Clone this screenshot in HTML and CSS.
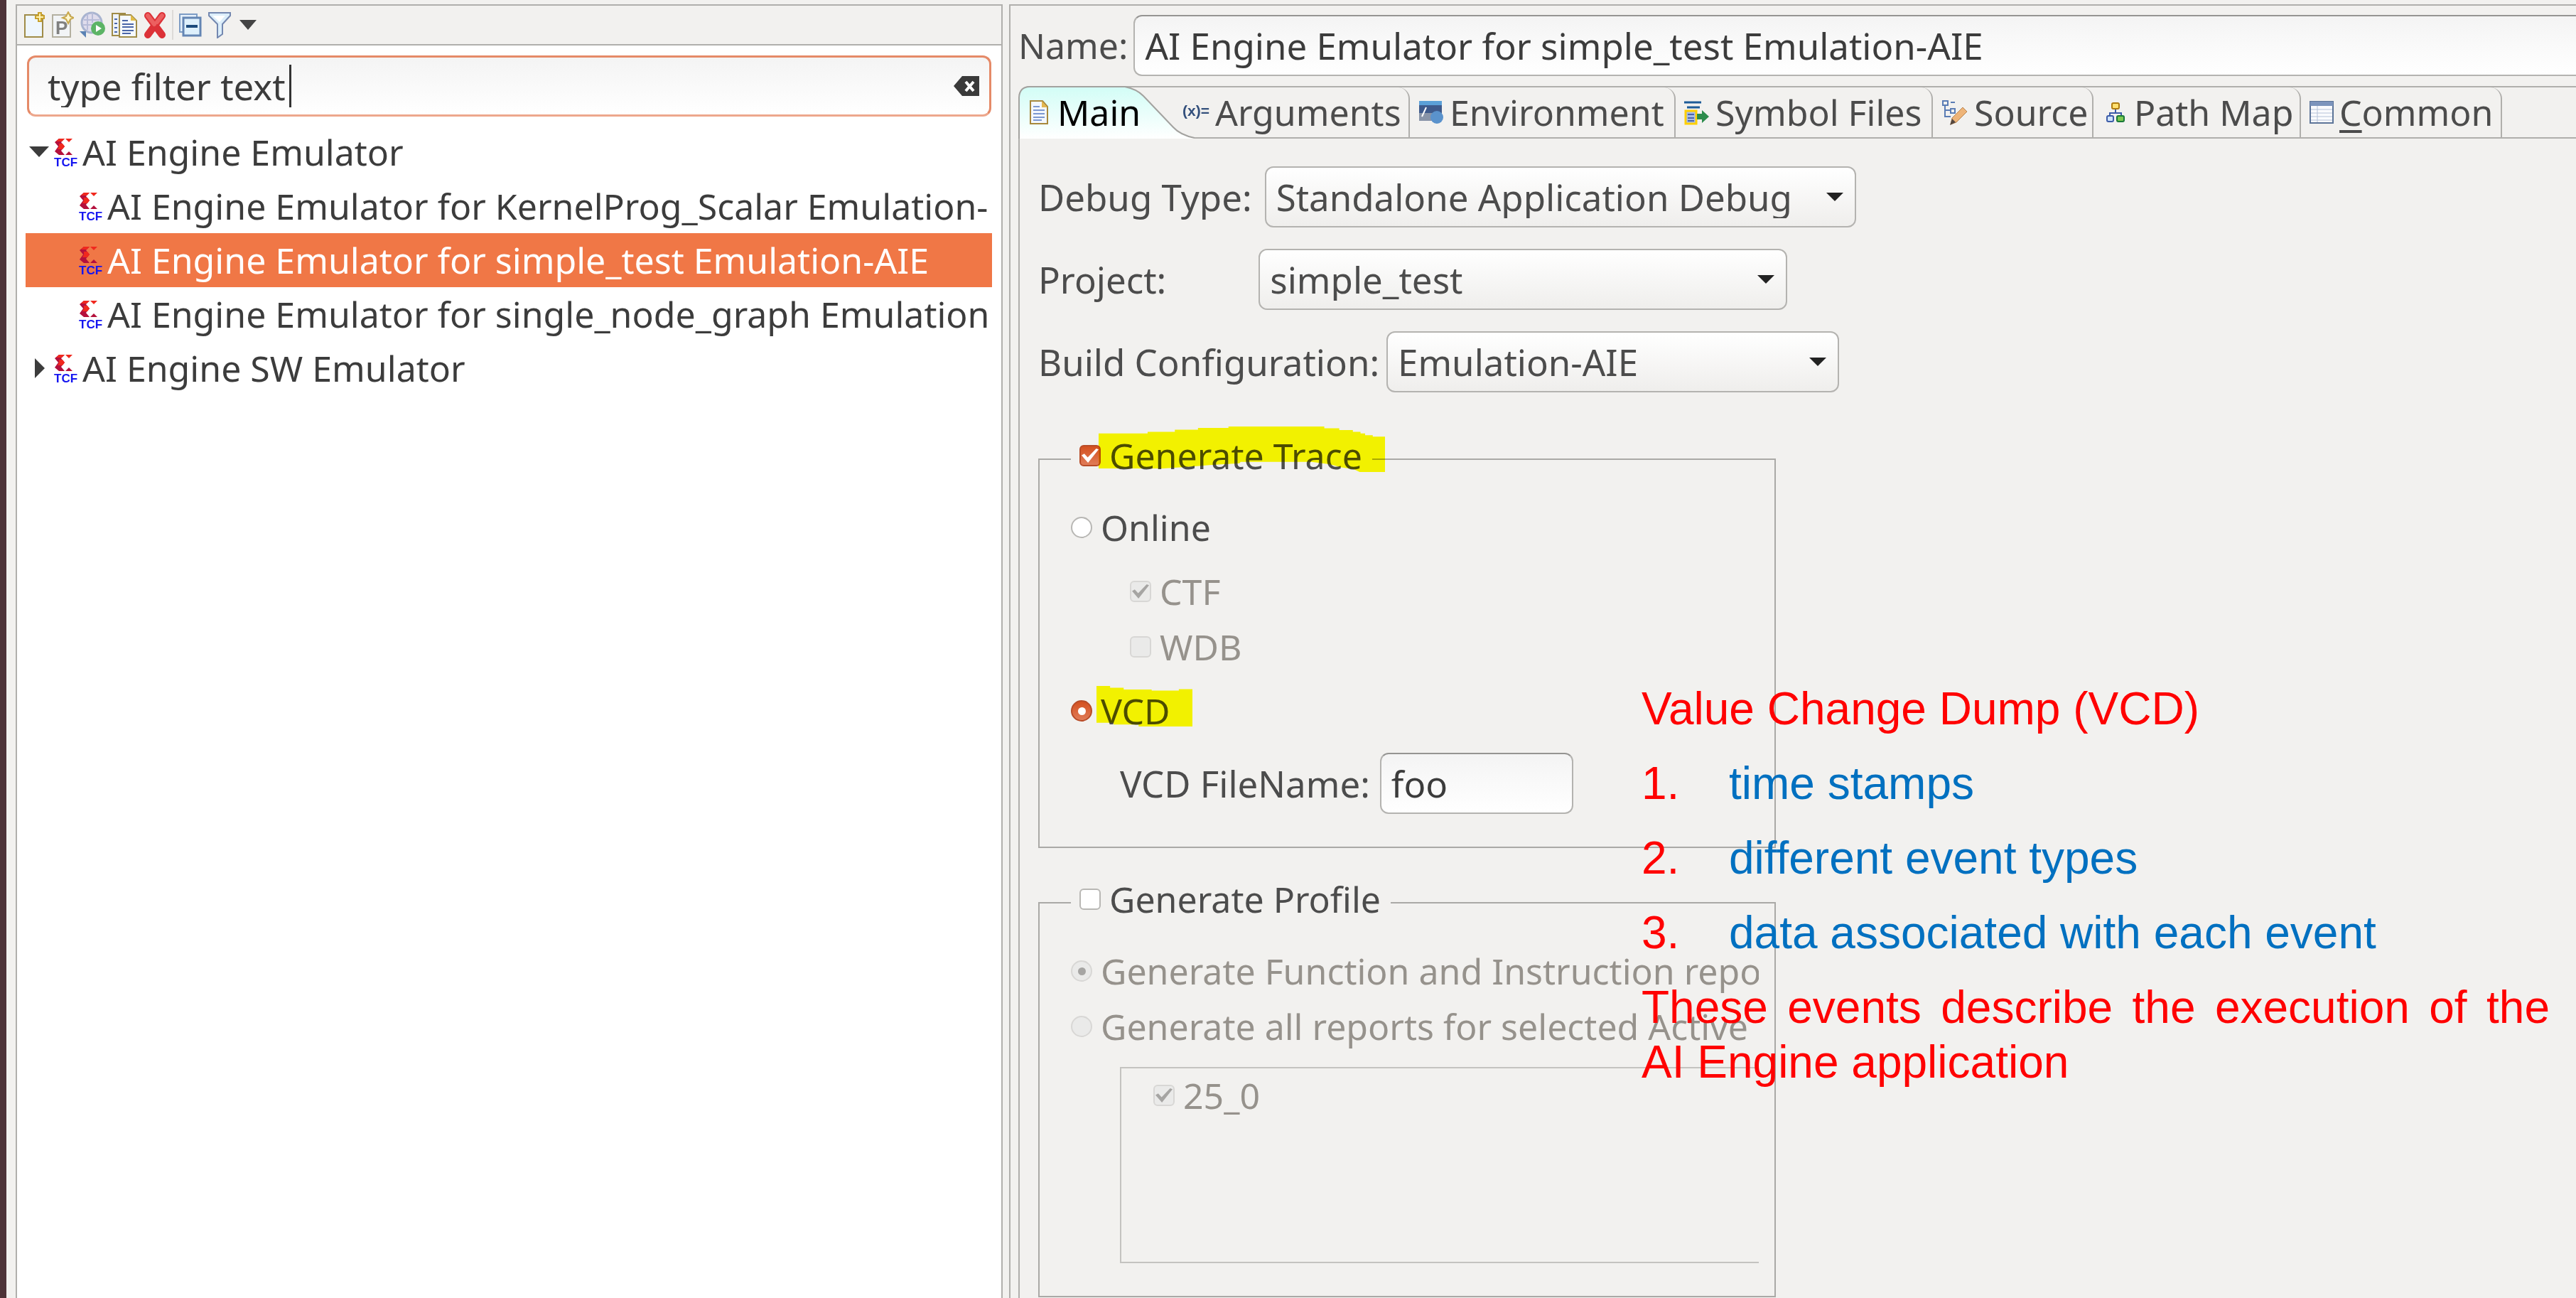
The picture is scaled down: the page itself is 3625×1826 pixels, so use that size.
FILE: index.html
```html
<!DOCTYPE html>
<html lang="en">
<head>
<meta charset="utf-8">
<title>Debug Configurations</title>
<link rel="stylesheet" href="styles.css">
</head>
<body>
<svg class="sprite" aria-hidden="true">
  <symbol id="tcf" viewBox="0 0 34 40">
    <path d="M7 1H15L10 6 15 12 10 18 15 24H7L1 19 6 12 1 6z" fill="#b4103c"/>
    <path d="M7 1h8l-4 4H3zM7 8l5 0 3 4-3 4H5l2-4z" fill="#f0281e"/>
    <path d="M16 24h10l-5-5z" fill="#b4103c"/>
    <path d="M16 1h10l-5 5z" fill="#f0281e"/>
    <text x="0" y="40" class="tcf-text">TCF</text>
  </symbol>
</svg>
<main class="window">
  <section class="pane configs">
    <div class="toolbar" role="toolbar" aria-label="Configurations">
      <button class="tool" aria-label="New configuration"><svg width="32" height="38" viewBox="0 0 32 38"><path d="M2 5h25v31H2z" fill="#eef6fd" stroke="#a08c48" stroke-width="2"/><path d="M23 1v14M16 8h14" stroke="#c8a02c" stroke-width="6"/><path d="M23 3v10M18 8h10" stroke="#fff3b0" stroke-width="2"/></svg></button>
      <button class="tool" aria-label="New prototype"><svg width="32" height="38" viewBox="0 0 32 38"><path d="M2 5h25v31H2z" fill="#f2f4f6" stroke="#b4b0a0" stroke-width="2"/><text x="6" y="32" class="proto-text">P</text><path d="M24 1l3 6 5 2-5 2-3 6-3-6-5-2 5-2z" fill="#fff8d0" stroke="#c8a84c" stroke-width="2"/></svg></button>
      <button class="tool" aria-label="Export"><svg width="38" height="38" viewBox="0 0 38 38"><circle cx="18" cy="16" r="14" fill="#dfdcec" stroke="#a9b4d0" stroke-width="3"/><path d="M7 12h22M5 19h14M12 4v22M19 2v14" stroke="#b8bcd8" stroke-width="2"/><path d="M1 28h9v9z" fill="#5a82b4"/><circle cx="27" cy="24" r="10" fill="#5cb465"/><path d="M24 19l8 5-8 5z" fill="#fff"/></svg></button>
      <button class="tool" aria-label="Duplicate"><svg width="38" height="38" viewBox="0 0 38 38"><path d="M2 3h18v31H2z" fill="#eef3fb" stroke="#a08c48" stroke-width="2"/><path d="M12 5h16l8 8v23H12z" fill="#f5f9fe" stroke="#a08c48" stroke-width="2"/><path d="M28 5v8h8z" fill="#e0bb48"/><path d="M5 11h4M5 17h4M5 23h4M5 29h4M16 13h8M16 18h16M16 22h16M16 27h16M16 31h12" stroke="#4a66a8" stroke-width="2"/></svg></button>
      <button class="tool" aria-label="Delete"><svg width="34" height="38" viewBox="0 0 34 38"><path d="M7 6l20 27M27 6L7 33" stroke="#dc3238" stroke-width="10" stroke-linecap="round"/><path d="M7 6l9 12M27 6l-7 9" stroke="#ec6060" stroke-width="6" stroke-linecap="round"/></svg></button>
      <span class="tool-rule"></span>
      <button class="tool" aria-label="Collapse all"><svg width="34" height="38" viewBox="0 0 34 38"><path d="M2 4h24v25H2z" fill="#e6f1fb" stroke="#7d9cc4" stroke-width="2"/><path d="M7 9h24v25H7z" fill="#def0fc" stroke="#6486b4" stroke-width="3"/><path d="M11 21h16" stroke="#1c4a7c" stroke-width="4"/></svg></button>
      <button class="tool" aria-label="Filter"><svg width="34" height="38" viewBox="0 0 34 38"><path d="M2 2h30v4L21 18v14l-7 5V18L2 6z" fill="#dceefa" stroke="#7488b0" stroke-width="2"/><path d="M7 6h18l-8 9z" fill="#fff"/></svg></button>
      <button class="tool menu-tool" aria-label="Filter menu"><svg width="24" height="14" viewBox="0 0 24 14"><path d="M0 0h24L12 14z" fill="#444"/></svg></button>
    </div>
    <div class="filter">
      <input class="filter-text" type="text" aria-label="Filter" value="type filter text">
      <span class="caret"></span>
      <button class="clear" aria-label="Clear"><svg width="36" height="30" viewBox="0 0 36 30"><path d="M12 1h24v28H12L0 15z" fill="#3a3a3a"/><path d="M17 9l11 13M28 9L17 22" stroke="#fff" stroke-width="4"/></svg></button>
    </div>
    <ul class="tree" role="tree">
      <li class="node" role="treeitem" aria-expanded="true"><svg class="twisty" width="28" height="28" viewBox="0 0 28 28"><path d="M0 6h28L14 21z" fill="#3c3c3c"/></svg><svg class="tcf"><use href="#tcf"/></svg><span>AI Engine Emulator</span></li>
      <li class="node child" role="treeitem"><svg class="tcf"><use href="#tcf"/></svg><span>AI Engine Emulator for KernelProg_Scalar Emulation-</span></li>
      <li class="node child selected" role="treeitem" aria-selected="true"><svg class="tcf"><use href="#tcf"/></svg><span>AI Engine Emulator for simple_test Emulation-AIE</span></li>
      <li class="node child" role="treeitem"><svg class="tcf"><use href="#tcf"/></svg><span>AI Engine Emulator for single_node_graph Emulation</span></li>
      <li class="node" role="treeitem" aria-expanded="false"><svg class="twisty" width="28" height="28" viewBox="0 0 28 28"><path d="M8 0l14 14L8 28z" fill="#3c3c3c"/></svg><svg class="tcf"><use href="#tcf"/></svg><span>AI Engine SW Emulator</span></li>
    </ul>
  </section>
  <section class="pane details">
    <div class="name-row">
      <label for="name">Name:</label>
      <input id="name" class="field name-field" type="text" value="AI Engine Emulator for simple_test Emulation-AIE">
    </div>
    <div class="tabs" role="tablist">
      <button class="tab main" role="tab" aria-selected="true">
        <svg class="tab-shape" viewBox="0 0 248 74" width="248" height="74"><defs><linearGradient id="glow" x1="0" y1="0" x2="0" y2="1"><stop offset="0" stop-color="#d2fdf6"/><stop offset="1" stop-color="#fff"/></linearGradient></defs><path d="M1 74V16Q2 1 16 1H150Q166 4 176 14L218 58Q228 69 248 73V74z" fill="url(#glow)"/><path d="M1 74V16Q2 1 16 1H150Q166 4 176 14L218 58Q228 69 248 73" fill="none" stroke="#a3a29f" stroke-width="2"/></svg>
        <svg class="tab-icon" width="28" height="34" viewBox="0 0 28 34"><path d="M2 1h17l7 8v24H2z" fill="#f3f7fd" stroke="#a8883c" stroke-width="2"/><path d="M18 1v9h8z" fill="#e4b850"/><path d="M6 9h9M6 14h16M6 19h16M6 24h16M6 28h12" stroke="#7c98d0" stroke-width="2"/></svg>
        <span>Main</span></button>
      <button class="tab arguments" role="tab"><svg class="tab-icon" width="38" height="34" viewBox="0 0 38 34"><text x="0" y="22" class="args-text">(x)=</text></svg><span>Arguments</span></button>
      <button class="tab environment" role="tab"><svg class="tab-icon" width="36" height="34" viewBox="0 0 36 34"><path d="M1 1h32v28H1z" fill="#3e5a8c"/><path d="M1 1h32v6H1z" fill="#5ba0d8"/><path d="M1 18h20v11H1z" fill="#8894a8"/><path d="M5 23l6-13" stroke="#fff" stroke-width="2"/><circle cx="26" cy="24" r="9" fill="#5a92cc"/></svg><span>Environment</span></button>
      <button class="tab symbols" role="tab"><svg class="tab-icon" width="36" height="36" viewBox="0 0 36 36"><path d="M0 4h24M4 11h18" stroke="#1c5c98" stroke-width="3"/><path d="M2 16h15v18H2z" fill="#a8bce8" stroke="#ffd000" stroke-width="3"/><path d="M5 21h9M5 26h9M5 30h9" stroke="#4a66a8" stroke-width="2"/><path d="M18 20h7v-5l10 9-10 9v-5h-7z" fill="#2c8c4c"/></svg><span>Symbol Files</span></button>
      <button class="tab source" role="tab"><svg class="tab-icon" width="38" height="36" viewBox="0 0 38 36"><path d="M2 2h7v6H2zM13 13h6v6h-6zM13 4h6M5 8v16h8M5 15h8" fill="none" stroke="#5a7cb4" stroke-width="2"/><path d="M15 26L30 11l6 6-15 15-8 3z" fill="#eeb478" stroke="#b88450" stroke-width="1"/><path d="M15 27l5 5-8 4z" fill="#554840"/></svg><span>Source</span></button>
      <button class="tab pathmap" role="tab"><svg class="tab-icon" width="28" height="28" viewBox="0 0 28 28"><path d="M14 9v6M6 19v-4h16v4" fill="none" stroke="#3c5ca8" stroke-width="2"/><rect x="9" y="1" width="10" height="8" rx="2" fill="#ffe070" stroke="#b07c10" stroke-width="2"/><rect x="2" y="19" width="9" height="8" rx="2" fill="#cfe4fa" stroke="#3c5ca8" stroke-width="2"/><rect x="16" y="19" width="10" height="8" rx="2" fill="#7cc850" stroke="#187838" stroke-width="2"/></svg><span>Path Map</span></button>
      <button class="tab common" role="tab"><svg class="tab-icon" width="34" height="32" viewBox="0 0 34 32"><path d="M1 1h32v30H1z" fill="#fafbfd" stroke="#5c7498" stroke-width="2"/><path d="M1 1h32v6H1z" fill="#7c94bc"/><path d="M2 12h30M2 17h30M2 22h30M2 27h30M11 7v23" stroke="#b4c2d8" stroke-width="1"/></svg><span><span class="mnemonic">C</span>ommon</span></button>
    </div>
    <div class="sheet">
      <div class="row"><label for="debug-type">Debug Type:</label>
        <div class="picker debug-type"><select id="debug-type"><option>Standalone Application Debug</option></select></div></div>
      <div class="row"><label for="project">Project:</label>
        <div class="picker project"><select id="project"><option>simple_test</option></select></div></div>
      <div class="row"><label for="build">Build Configuration:</label>
        <div class="picker build"><select id="build"><option>Emulation-AIE</option></select></div></div>

      <fieldset class="group trace">
        <legend><label class="choice"><input type="checkbox" checked><span>Generate Trace</span></label>
          <svg class="marker trace-marker" viewBox="303 96 1052 156" preserveAspectRatio="none"><path d="M303 120H483V114H583V107H668V101H780V96H1132V102H1187V108H1237V114H1265V120H1282V126H1310V131H1355V252H1262L1240 242 1195 236 1150 225 1085 217H825L820 222 710 228 640 234 540 240H303z" fill="#ff0"/></svg>
        </legend>
        <label class="choice"><input type="radio" name="trace"><span>Online</span></label>
        <div class="nested">
          <label class="choice"><input type="checkbox" checked disabled><span>CTF</span></label>
          <label class="choice"><input type="checkbox" disabled><span>WDB</span></label>
        </div>
        <div class="vcd"><label class="choice"><input type="radio" name="trace" checked><span>VCD</span></label>
          <svg class="marker vcd-marker" viewBox="297 990 353 139" preserveAspectRatio="none"><path d="M297 990H347V996H397V1002H500V1006H600V1001H650V1129H452V1122H360V1116H297z" fill="#ff0"/></svg>
        </div>
        <div class="file-row"><label for="vcd-file">VCD FileName:</label><input id="vcd-file" class="field file-field" type="text" value="foo"></div>
      </fieldset>

      <fieldset class="group">
        <legend><label class="choice"><input type="checkbox"><span>Generate Profile</span></label></legend>
        <label class="choice"><input type="radio" name="profile" checked disabled><span>Generate Function and Instruction repo</span></label>
        <label class="choice"><input type="radio" name="profile" disabled><span>Generate all reports for selected Active</span></label>
        <div class="list"><label class="choice"><input type="checkbox" checked disabled><span>25_0</span></label></div>
      </fieldset>
    </div>
    <aside class="note">
      <p>Value Change Dump (VCD)</p>
      <ol>
        <li><span>time stamps</span></li>
        <li><span>different event types</span></li>
        <li><span>data associated with each event</span></li>
      </ol>
      <p>These events describe the execution of the AI Engine application</p>
    </aside>
  </section>
</main>
</body>
</html>
```
FILE: styles.css
```css
* { box-sizing: border-box; }
body {
  margin: 0;
  background: #f2f1ef;
  color: #4c4c4c;
  font: 51px/60px "Noto Sans", "Open Sans", sans-serif;
}
button, input, select { font: inherit; color: inherit; }
button { border: 0; padding: 0; background: none; }
.sprite { position: absolute; width: 0; height: 0; }

.window {
  display: grid;
  grid-template-columns: 1389fr 2205fr;
  gap: 9px;
  min-height: 100vh;
  padding: 6px 0 0 13px;
  border-left: 9px solid #4d3338;
}
.pane { border: 2px solid #b0afac; border-bottom: 0; min-width: 0; }

/* configuration list */
.configs { background: #fff; color: #3c3c3c; }
.toolbar {
  display: flex;
  align-items: center;
  gap: 7px;
  height: 56px;
  padding-left: 9px;
  background: #f2f1ef;
  border-bottom: 2px solid #b0afac;
}
.tool { display: flex; }
.tool-rule { width: 2px; height: 42px; background: #dddbd8; }
.menu-tool { margin-left: 4px; }
.proto-text { font: bold 26px "Liberation Sans", sans-serif; fill: #808080; }
.filter {
  display: flex;
  align-items: center;
  height: 86px;
  margin: 14px 14px 0 14px;
  padding: 0 14px 0 26px;
  border: 3px solid #e58a68;
  border-bottom-color: #eda78c;
  border-radius: 12px;
  background: linear-gradient(#f4f4f4, #fff);
}
.filter-text { border: 0; padding: 0; width: 340px; background: none; outline: 0; }
.caret { width: 3px; height: 60px; background: #333; }
.clear { display: flex; margin-left: auto; }
.tree { list-style: none; margin: 12px 13px 0 12px; padding: 0; font-size: 50px; }
.node {
  display: flex;
  align-items: center;
  height: 76px;
  padding-left: 5px;
  overflow: hidden;
  white-space: nowrap;
}
.child { padding-left: 75px; }
.selected { background: #f07746; color: #fff; }
.twisty { flex: none; margin-right: 7px; }
.tcf { flex: none; width: 34px; height: 40px; margin-right: 6px; }
.tcf-text { font: bold 17px "Liberation Sans", sans-serif; fill: #1414f0; }

/* configuration details */
.details { display: flex; flex-direction: column; position: relative; border-right: 0; }
.name-row { display: flex; align-items: center; padding: 13px 0 0 11px; gap: 8px; }
.name-row label { font-size: 50px; }
.field {
  height: 86px;
  padding: 0 14px;
  border: 2px solid #b4b3b0;
  border-top-color: #959492;
  border-radius: 12px;
  background: linear-gradient(#f4f4f4, #fff);
  color: #3c3c3c;
}
.name-field { flex: 1; min-width: 0; border-right: 0; border-radius: 12px 0 0 12px; }
.tabs {
  display: flex;
  height: 74px;
  margin: 14px 0 0 11px;
  border: 2px solid #b0afac;
  border-width: 2px 0;
  border-top-left-radius: 16px;
  font-size: 50px;
}
.tab {
  position: relative;
  display: flex;
  align-items: center;
  gap: 8px;
  padding-left: 12px;
  border-right: 2px solid #b0afac;
  border-top-right-radius: 16px;
  white-space: nowrap;
}
.tab-icon { flex: none; position: relative; }
.tab > span { position: relative; }
.main { width: 230px; gap: 12px; padding-left: 15px; border-right: 0; color: #000; }
.tab-shape { position: absolute; left: 0; top: -2px; }
.arguments { width: 321px; padding-left: 1px; }
.environment { width: 374px; }
.symbols { width: 362px; }
.source { width: 226px; }
.pathmap { width: 292px; padding-left: 17px; gap: 12px; }
.common { width: 283px; }
.args-text { font: bold 21px "Liberation Sans", sans-serif; fill: #34507c; }
.mnemonic { text-decoration: underline 4px; text-underline-offset: 6px; }
.sheet { flex: 1; margin-left: 11px; padding: 39px 0 0 26px; border-left: 2px solid #b0afac; }
.row { display: flex; align-items: center; height: 86px; margin-bottom: 30px; }
.picker { position: relative; height: 86px; }
.picker select {
  width: 100%;
  height: 100%;
  padding: 0 14px;
  appearance: none;
  border: 2px solid #b4b3b0;
  border-radius: 12px;
  background: linear-gradient(#fff, #efeeec);
}
.picker::after {
  content: "";
  position: absolute;
  right: 18px;
  top: 37px;
  border: 12px solid transparent;
  border-top-color: #222;
  border-bottom: 0;
}
.debug-type { width: 832px; margin-left: 18px; }
.project { width: 744px; margin-left: 130px; }
.build { width: 637px; margin-left: 10px; }

.group {
  width: 1038px;
  min-width: 0;
  margin: 0;
  padding: 22px 22px 46px 44px;
  border: 2px solid #aaa9a6;
  font-size: 50px;
}
.trace { margin: 59px 0 42px; }
legend { position: relative; padding: 0 14px 10px 12px; }
.choice {
  display: flex;
  align-items: center;
  gap: 12px;
  height: 78px;
  white-space: nowrap;
  overflow: hidden;
}
legend .choice { height: 60px; }
.choice input {
  flex: none;
  display: grid;
  place-items: center;
  width: 30px;
  height: 30px;
  margin: 0;
  appearance: none;
  border: 2px solid #b8b7b4;
  border-radius: 6px;
  background: #fff;
}
.choice input[type="radio"] { border-radius: 50%; }
.choice input:checked { border-color: #b84c28; background: linear-gradient(#d4501f, #e07c58); }
.choice input:disabled { border-color: #d8d7d5; background: #eaeae9; }
.choice input:checked::before { content: ""; background: #fff; }
.choice input:disabled::before { background: #a6a5a3; }
.choice input[type="checkbox"]::before {
  width: 24px;
  height: 20px;
  clip-path: polygon(0 48%, 16% 36%, 36% 62%, 86% 0, 100% 6%, 38% 100%);
}
.choice input[type="radio"]::before { width: 11px; height: 11px; border-radius: 50%; }
.choice:has(input:disabled) { color: #96928c; }
.nested { padding: 12px 0 12px 83px; }
.vcd { position: relative; }
.marker { position: absolute; mix-blend-mode: multiply; }
.trace-marker { left: 39px; top: -11px; width: 403px; height: 64px; }
.vcd-marker { left: 36px; top: 4px; width: 135px; height: 57px; }
.file-row { display: flex; align-items: center; gap: 14px; margin-top: 20px; padding-left: 69px; font-size: 51px; }
.file-field { width: 272px; }
.list {
  height: 276px;
  margin: 18px 0 0 69px;
  padding-left: 45px;
  border: 2px solid #c4c3c0;
  border-right: 0;
}
.list .choice { height: 76px; }

/* annotation laid over the form */
.note {
  position: absolute;
  right: 37px;
  top: 951px;
  width: 1278px;
  color: #f00;
  font: 64px/77px "Liberation Sans", Arial, sans-serif;
  text-align: justify;
}
.note p { margin: 0; }
.note ol { margin: 28px 0; padding: 0; display: grid; gap: 28px; counter-reset: item; list-style: none; }
.note li { display: flex; counter-increment: item; }
.note li::before { content: counter(item) "."; width: 123px; }
.note li span { color: #0070c0; }
```
